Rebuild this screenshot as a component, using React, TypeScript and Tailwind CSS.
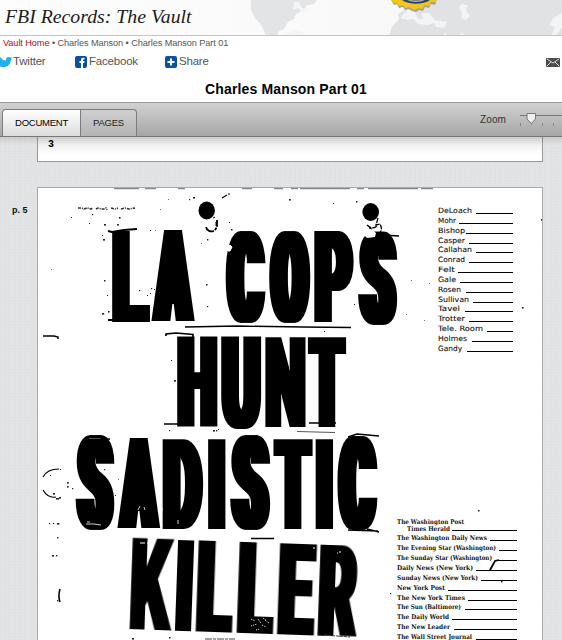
import React from "react";

type Glyph = { ch: string; x: number; x2: number; y: number; y2: number; r: number };

const g = (ch: string, x: number, x2: number, y: number, y2: number, r: number): Glyph => ({ ch, x, x2, y, y2, r });

const HEADLINE: { word: string; rotate?: string; glyphs: Glyph[] }[] = [
  { word: "LA", glyphs: [g("L", 112, 150.5, 230, 322, 3), g("A", 151, 195, 230, 322, 5)] },
  {
    word: "COPS",
    glyphs: [g("C", 225.5, 266, 229.5, 323.5, 5), g("O", 269, 310.5, 229.5, 323.5, 5), g("P", 314, 354, 231, 322, 4), g("S", 358, 397.5, 232, 325.5, 5)],
  },
  {
    word: "HUNT",
    glyphs: [g("H", 177, 217.5, 335.5, 427, 4), g("U", 221, 261.5, 335.5, 429, 4), g("N", 265, 305.5, 335.5, 427, 3), g("T", 307.5, 346.5, 335.5, 426.5, 4)],
  },
  {
    word: "SADISTIC",
    glyphs: [
      g("S", 75.5, 114.7, 436, 530.5, 5),
      g("A", 117, 160.5, 437.5, 529, 5),
      g("D", 162.5, 203.7, 437.5, 529, 4),
      g("I", 207.5, 225.7, 437.5, 529, 0),
      g("S", 230, 270.5, 436, 530.5, 5),
      g("T", 273, 313, 438, 529, 4),
      g("I", 315, 333.3, 438, 529, 0),
      g("C", 337.3, 378, 436, 530.5, 5),
    ],
  },
  {
    word: "KILLER",
    rotate: "rotate(2 244 586)",
    glyphs: [
      g("K", 131, 173, 541, 633, 2),
      g("I", 176, 193, 541, 633, 0),
      g("L", 197, 234, 541, 633, 3),
      g("L", 238, 275, 541, 633, 3),
      g("E", 278.5, 316, 541, 633, 3),
      g("R", 319, 358.5, 541, 633, 3),
    ],
  },
];

const pen = document.createElement("canvas").getContext("2d")!;

/** One wood-type letter, stretched so its ink fills the given box. */
function WoodLetter({ ch, x, x2, y, y2, r }: Glyph) {
  pen.font = "900 100px Roboto";
  const m = pen.measureText(ch);
  const left = -m.actualBoundingBoxLeft;
  const sx = (x2 - x - 2 * r) / (m.actualBoundingBoxRight - left);
  const sy = (y2 - y) / (m.actualBoundingBoxAscent + m.actualBoundingBoxDescent);
  const tx = x + r - left * sx;
  const ty = y + m.actualBoundingBoxAscent * sy;
  return (
    <g filter={r ? `url(#ink${r})` : undefined}>
      <text transform={`translate(${tx} ${ty}) scale(${sx} ${sy})`} fontFamily="Roboto, sans-serif" fontWeight={900} fontSize={100}>
        {ch}
      </text>
    </g>
  );
}

const SPECKS: [number, number, number][] = [
  [71, 217, 1], [89, 223, 1], [92, 214, 1.2], [104, 224, 2], [117, 224, 1.8], [119, 217, 1.6], [102, 235, 1], [103, 239, 2], [51, 269, 0.8],
  [104, 280, 1.5], [107, 295, 1], [102, 313, 2.2], [108, 311, 1.6], [139, 290, 1.2], [151, 288, 1.2], [154, 289, 1], [147, 295, 1], [150, 293, 1],
  [193, 197, 2], [189, 199, 1.2], [168, 199, 0.8], [160, 209, 0.8], [150, 230, 1], [155, 230, 0.8], [201, 243, 0.8], [207, 239, 1.4], [206, 284, 1.5],
  [207, 306, 1.2], [289, 199, 1.8], [333, 203, 1], [356, 201, 1.5], [229, 222, 1], [231, 229, 1.5], [411, 280, 0.8], [406, 314, 0.8], [354, 304, 1],
  [429, 283, 0.8], [424, 320, 0.8], [522, 307, 1.6], [541, 219, 1.6], [171, 360, 1], [174, 380, 2], [324, 331, 1],
  [67, 482, 1.8], [67, 486, 1.6], [72, 488, 1.2], [60, 469, 1], [104, 469, 1.2], [118, 479, 0.8], [115, 495, 1], [49, 523, 1.2], [53, 523, 1.2],
  [57, 523, 2.4], [57, 537, 1.4], [52, 555, 2], [56, 555, 1.4], [57, 600, 1.4], [478, 510, 1.5], [390, 593, 1.2], [132, 638, 2], [169, 637, 1.5],
  [50, 475, 1], [53, 493, 2], [56, 498, 3], [59, 497, 2], [169, 430, 1.2], [213, 430, 2], [216, 430, 1.4], [218, 429, 1], [501, 581, 1.5],
];

function ScanArtwork() {
  return (
    <svg className="pointer-events-none absolute left-0 top-0 h-[452px] w-[504px]" viewBox="38 188 504 452">
      <defs>
        {[2, 3, 4, 5].map((r) => (
          <filter key={r} id={`ink${r}`} x="-40%" y="-5%" width="180%" height="110%" colorInterpolationFilters="sRGB">
            <feMorphology operator="dilate" radius={`${r} 0.01`} />
          </filter>
        ))}
      </defs>
      <g fill="#000">
        {HEADLINE.map((w) => (
          <g key={w.word} transform={w.rotate} aria-label={w.word}>
            {w.glyphs.map((l, i) => (
              <WoodLetter key={i} {...l} />
            ))}
          </g>
        ))}
      </g>
      <g fill="#222">
        {SPECKS.map(([x, y, s], i) => (
          <rect key={i} x={x} y={y} width={s} height={Math.min(s, 1.6)} />
        ))}
      </g>
      <g fill="none" stroke="#fff">
        <path d="M228 251v-4l2-2 2 2-2 4z" fill="#fff" />
        <path d="M361 229l-1 6 4 0 3 3 8-1 1-4-6-5z" fill="#fff" stroke="none" />
        <path d="M86 524l8 0 7 1m-14-3h3" strokeWidth=".8" />
        <path d="M89 439h12m37 71 2-4m4 1 1 3m17-2v3m16 13v-4" strokeWidth=".8" />
        <path d="M251 619l4 2m3-2 3 4m2-5 3 2m-15 6 6-2m5 1 4 2m-10 3 4-1m5-9 4 3" strokeWidth="1" strokeDasharray="1 1" />
        <path d="M140 543h5m2 0 6 0m165-2v2m19 10h1m-25-5h2m24 4h2" strokeWidth="1.200" />
      </g>
      <g fill="#000">
        <ellipse cx="206.700" cy="210.500" rx="8.200" ry="9" />
        <ellipse cx="370.700" cy="212" rx="8.300" ry="9" />
      </g>
      <g fill="none" stroke="#000">
        <path d="M206 227c1 5 9 7 11-1v-6" strokeWidth="1.800" strokeDasharray="10 1 3 1" />
        <path d="M213 218l2-1m1 5v4" />
        <path d="M378 218l-2 7 4-1c3 5 1 9-3 11m-8-7 3 1m-5-4c3 3 7 4 10 1" strokeWidth="1.300" strokeDasharray="5 1" />
        <path d="M382 235l17 1" strokeWidth="1.500" />
        <path d="M108 231l4 1 12-2 13-1M108 320h16" strokeWidth="2" />
        <path d="M222 198l5-3m1-1h2" strokeWidth="1.200" />
        <path d="M185 327l53-1 65 1 48 .5" strokeWidth="1.300" />
        <path d="M166 336v-2l10-1 17 1.500v5M164 424h14m131-1h27" strokeWidth="1.700" />
        <path d="M297 431.500l38 1" stroke="#555" />
        <path d="M348 437l9-3 22 2m-31 94 30 1m-11-2 12 3" strokeWidth="1.500" />
        <path d="M83 440l27-1M251 538.500h23" strokeWidth="1.300" />
        <path d="M43 336h11l4 1v2" strokeWidth="1.500" />
        <path d="M43 477c3-6 9-8 16-8M43 490c3 5 8 8 13 7" strokeWidth="1.200" />
        <path d="M60 589c-1.500 5-1.500 9 0 13" strokeWidth="1.600" />
        <path d="M324 635l26 2M205 639h30" stroke="#444" strokeDasharray="7 1 3 1" />
        <path d="M78 208h4l2 1 3-1 4 1 2-1m3 1 2-1 3 1h3l2-1 1 2m4-2 4 1 3-1m3 1 4-1 4 1 6-1" strokeWidth="1.600" strokeDasharray="3 1 1 1" stroke="#333" />
        <path d="M114 188.500h25m6 0h11m22 0h7m57 0h10m22 0h9m8 0h7m2 0h50m7 0h7m4 0h50m3 0h12" stroke="#888" strokeWidth="1.500" />
        <path d="M490 570l5-9 4-1" strokeWidth="1.800" />
      </g>
    </svg>
  );
}

type Row = { name: string; w: number; line: number };

const OFFICIALS: Row[] = [
  { name: "DeLoach", w: 34, line: 37 },
  { name: "Mohr", w: 18, line: 54 },
  { name: "Bishop", w: 27, line: 47 },
  { name: "Casper", w: 27, line: 44 },
  { name: "Callahan", w: 34, line: 37 },
  { name: "Conrad", w: 27, line: 44 },
  { name: "Felt", w: 17, line: 55 },
  { name: "Gale", w: 18, line: 53 },
  { name: "Rosen", w: 23, line: 47 },
  { name: "Sullivan", w: 31, line: 40 },
  { name: "Tavel", w: 22, line: 48 },
  { name: "Trotter", w: 27, line: 44 },
  { name: "Tele. Room", w: 45, line: 26 },
  { name: "Holmes", w: 29, line: 41 },
  { name: "Gandy", w: 24, line: 46 },
];

const PAPERS: Row[] = [
  { name: "The Washington Daily News", w: 90, line: 27 },
  { name: "The Evening Star (Washington)", w: 99, line: 18 },
  { name: "The Sunday Star (Washington)", w: 95, line: 21 },
  { name: "Daily News (New York)", w: 76, line: 41 },
  { name: "Sunday News (New York)", w: 81, line: 36 },
  { name: "New York Post", w: 48, line: 69 },
  { name: "The New York Times", w: 68, line: 49 },
  { name: "The Sun (Baltimore)", w: 64, line: 52 },
  { name: "The Daily World", w: 52, line: 65 },
  { name: "The New Leader", w: 53, line: 63 },
  { name: "The Wall Street Journal", w: 75, line: 41 },
];

/** Typed label squeezed to the width its typewriter gave it. */
function Typed({ name, w, serif }: { name: string; w: number; serif?: boolean }) {
  return (
    <svg className="h-[10px] shrink-0 overflow-visible" style={{ width: w }}>
      <text
        x="0"
        y="7.300"
        textLength={w}
        lengthAdjust="spacingAndGlyphs"
        fontSize={serif ? 6.4 : 7.3}
        fontWeight={serif ? 700 : 400}
        fontFamily={serif ? '"DejaVu Serif", serif' : '"DejaVu Sans", sans-serif'}
        fill="#111"
        stroke="#111"
        strokeWidth={serif ? 0 : 0.1}
      >
        {name}
      </text>
    </svg>
  );
}

function FormRow({ row, serif, height }: { row: Row; serif?: boolean; height: string }) {
  return (
    <div className={`flex items-start justify-between ${height}`}>
      <Typed name={row.name} w={row.w} serif={serif} />
      <span className="mt-[7px] h-px bg-black" style={{ width: row.line }} />
    </div>
  );
}

function SiteHeader() {
  return (
    <header className="relative h-9 overflow-hidden border-b border-[#c4c4c4] bg-[linear-gradient(90deg,#fdfdfd,#f7f7f7)]">
      <svg className="absolute inset-0 h-9 w-full" viewBox="0 0 562 36">
        <path d="M251 0h66l-3 4-7 1-3 5-8 4-2 5-6 3-4 7-5 2-2 5h-11l-4-10-7-8-4-8z" fill="#e3e4e5" />
        <path d="M294 2l5 0 3 6 7 1-8 2-3-3-5 2zM285 34l9-4 8 1 2 5h-20z" fill="#f5f5f5" />
        <path d="M389 36l3-9 7-8-1-5 8-5-6-3 5-6h157v36z" fill="#e0e2e4" />
        <path d="M400 18l7-8 7 0 4 9 5 0-2-6 8 0 6 7 12 2-3 6-8-1-2-4-6 2-10-1-5-5-6 1zM461 4l7 1-2 5 4 6-4 4-5-2 1-5-3-5zM553 18l9-5v14l-6 9h-5l4-9-6-2z" fill="#f3f4f4" />
        <path d="M461 32l5 4h-6zM445 33l3 3h-5z" fill="#f5f5f5" />
      </svg>
      <svg className="absolute left-[389px] top-0 h-[13px] w-[54px]" viewBox="0 0 54 13">
        <path d="M2 0l3 5 3-1 2 4 4-1 2 3 4-1 3 2 4 1 3-2 4 1 2-4 4 1 2-4 4 1 2-6z" fill="#a9a28c" />
        <path d="M2 0l3 3 3 0 2 3 4-1 2 3 4-1 3 2 3 1 4-2 3 1 3-4 4 1 2-4 4 0 2-2z" fill="#f4c51c" />
        <path d="M13 0c7 5 21 5 28 0z" fill="#27466f" />
        <path d="M18 0c5 2.500 13 2.500 18 0z" fill="#b9b08a" />
        <path d="M21 0c4 1 8 1 12 0z" fill="#5f7396" />
      </svg>
      <h1 className="relative pl-[5px] pt-[4px] font-['Liberation_Serif',serif] text-[19.8px] leading-[24px] italic text-[#1c1c1c]">FBI Records: The Vault</h1>
    </header>
  );
}

function ShareBar() {
  return (
    <div className="flex h-[26px] items-center text-[11.5px] tracking-[-0.2px] text-[#555]">
      <div className="flex w-[75px] items-center">
        <svg className="h-3 w-3" viewBox="0 0 12 12">
          <path d="M0 1l3 3 3 .5C5.500 1.500 8 0 10 1.500L12 1l-1 2 1 0-1.200 1.500C10.500 9 6 12.500 0 10.500z" fill="#1fb0ee" />
        </svg>
        <span className="pl-px">Twitter</span>
      </div>
      <div className="flex w-[90px] items-center gap-0.5">
        <svg className="h-3 w-3" viewBox="0 0 12 12">
          <rect width="12" height="12" rx="2" fill="#0b51a1" />
          <path d="M6 12V7H4.500V5H6V4c0-1.700 1-2.500 3.500-2.200v1.700C8.300 3.400 8 3.600 8 5h1.500L9.200 7H8v5z" fill="#fff" />
        </svg>
        <span>Facebook</span>
      </div>
      <div className="flex items-center gap-0.5">
        <svg className="h-3 w-3" viewBox="0 0 12 12">
          <rect width="12" height="12" rx="2" fill="#0b51a1" />
          <path d="M6 2.500v7M2.500 6h7" stroke="#fff" strokeWidth="2" />
        </svg>
        <span>Share</span>
      </div>
      <svg className="ml-auto mr-[2px] mt-px h-[9px] w-[14px]" viewBox="0 0 14 9">
        <rect width="14" height="9" rx="1" fill="#4d4d4d" />
        <path d="M1 1l6 4 6-4M1 8l4-4m8 4-4-4" stroke="#ddd" fill="none" />
      </svg>
    </div>
  );
}

function Toolbar() {
  return (
    <div className="flex h-[35px] items-start border-b border-t border-b-[#777] border-t-[#999] bg-[linear-gradient(#d2d2d2,#a6a6a6)] pl-[2px]">
      <div className="mt-[6px] flex h-[27px] text-[9.500px] leading-[26px] tracking-[-0.25px]">
        <div className="w-[79px] rounded-tl border border-b-0 border-[#7c7c7c] bg-[linear-gradient(#fff,#dcdcdc)] text-center text-black">DOCUMENT</div>
        <div className="w-[56px] rounded-tr border border-b-0 border-l-0 border-[#7c7c7c] bg-[linear-gradient(#cfcfcf,#b4b4b4)] text-center text-[#222]">PAGES</div>
      </div>
      <span className="ml-auto mt-[10px] text-[10px] leading-[14px] tracking-[0.1px] text-[#333]">Zoom</span>
      <svg className="ml-[14px] mt-[9px] h-4 w-[42px]" viewBox="0 0 42 16">
        <path d="M0 3.500h42" stroke="#777" />
        <path d="M.5 11v3m11-3v2m11-2v3m11-3v3" stroke="#888" />
        <path d="M7 1.500h8.500V7l-4.200 4.500L7 7z" fill="#efefef" stroke="#777" />
      </svg>
    </div>
  );
}

export default function App() {
  return (
    <div className="flex h-[640px] w-full flex-col overflow-hidden bg-white font-['Liberation_Sans',sans-serif]">
      <SiteHeader />
      <nav className="h-[13px] whitespace-nowrap pl-[3px] text-[9.200px] leading-[14px] tracking-[-0.09px] text-[#555]">
        <span className="text-[#b00c1c]">Vault Home</span> • Charles Manson • Charles Manson Part 01
      </nav>
      <ShareBar />
      <h2 className="h-[27px] pl-[10px] pt-[5px] text-center text-[14px] font-bold leading-[18px] tracking-[0.14px] text-black">Charles Manson Part 01</h2>
      <Toolbar />
      <main className="relative flex h-[503px] flex-col overflow-hidden bg-[#dfe1e3] bg-[repeating-linear-gradient(0deg,#d8dadd50_0px,#e7e9eb50_1px,#dfe1e350_3px),repeating-linear-gradient(90deg,#d8dadd50_0px,#e7e9eb50_2px,#dfe1e350_5px)]">
        <section className="ml-[37px] h-[25px] w-[506px] shrink-0 border border-t-0 border-[#999] bg-[linear-gradient(#e5e5e5,#fff_18px)] pl-[10px] font-['Liberation_Mono',monospace] text-[10px] font-bold leading-[15px]">3</section>
        <div className="mt-[25px] flex h-[453px] shrink-0">
          <div className="w-[37px] pl-[12px] pt-[17px] text-[9px] font-bold leading-[12px] text-[#111]">p. 5</div>
          <article className="relative w-[506px] border border-b-0 border-[#aaa] bg-white">
            <ScanArtwork />
            <div className="flex flex-col">
              <div className="ml-[400px] mt-[18px] w-[75px]">
                {OFFICIALS.map((row) => (
                  <FormRow key={row.name} row={row} height="h-[9.85px]" />
                ))}
              </div>
              <div className="ml-[359px] mt-[163.5px] w-[120px]">
                <div className="h-[7px]">
                  <Typed name="The Washington Post" w={67} serif />
                </div>
                <div className="flex h-[9px] items-start justify-between pl-[10px]">
                  <Typed name="Times Herald" w={43} serif />
                  <span className="mt-[6px] h-px w-[65px] bg-black" />
                </div>
                {PAPERS.map((row) => (
                  <FormRow key={row.name} row={row} serif height="h-[9.9px]" />
                ))}
              </div>
            </div>
          </article>
        </div>
        <div className="absolute inset-x-0 top-0 h-2 bg-[linear-gradient(#0000001c,#00000000)]" />
      </main>
    </div>
  );
}
